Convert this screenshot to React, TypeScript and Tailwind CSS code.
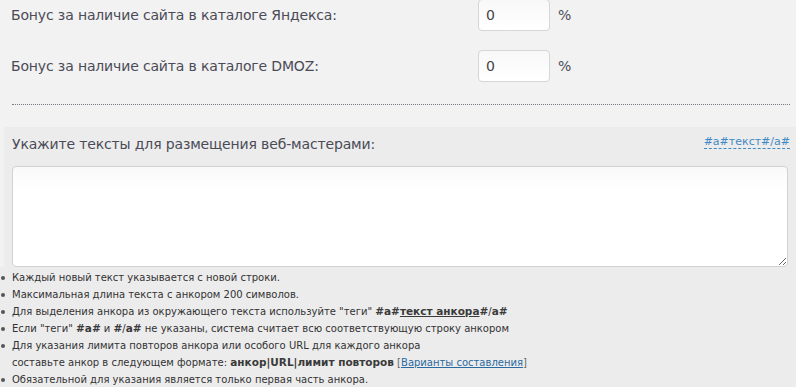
import React from "react";

const Bullet = () => (
  <span className="absolute left-[1px] top-[7px] w-[4px] h-[4px] rounded-full bg-[#555]" />
);

const B = ({ children }: { children: React.ReactNode }) => (
  <b className="text-[10.5px] text-[#3a3a3a]">{children}</b>
);

export default function App() {
  return (
    <div className="w-[796px] h-[387px] overflow-hidden bg-[#f2f2f2] text-[#4b4b57]" style={{ fontFamily: "'DejaVu Sans', Verdana, sans-serif" }}>
      <div className="flex flex-col">
        <div className="flex items-center h-[32px] mt-[-1px]">
          <div className="w-[478px] pl-[11px] text-[14px] tracking-[-0.15px]">Бонус за наличие сайта в каталоге Яндекса:</div>
          <div className="w-[72px] h-[32px] rounded-[4px] border border-[#d6d6d6] bg-gradient-to-b from-[#f8f8f8] to-white flex items-center pl-[7px] text-[14px] text-[#444]">0</div>
          <div className="ml-[8px] text-[14px]">%</div>
        </div>
        <div className="flex items-center h-[32px] mt-[19px]">
          <div className="w-[478px] pl-[11px] text-[14px] tracking-[-0.15px]">Бонус за наличие сайта в каталоге DMOZ:</div>
          <div className="w-[72px] h-[32px] rounded-[4px] border border-[#d6d6d6] bg-gradient-to-b from-[#f8f8f8] to-white flex items-center pl-[7px] text-[14px] text-[#444]">0</div>
          <div className="ml-[8px] text-[14px]">%</div>
        </div>
        <div className="mt-[22px] ml-[12px] mr-[6px] border-t border-dotted border-[#7a7a85]" />
        <div className="mt-[22px] ml-[4px] bg-[#ececec]">
          <div className="h-[39px] flex items-center justify-between pl-[8px] pr-[6px]">
            <div className="text-[14px] tracking-[-0.15px] mt-[-4px]">Укажите тексты для размещения веб-мастерами:</div>
            <span className="text-[11px] text-[#3f8ac4] border-b border-dashed border-[#3f8ac4] leading-[13px] mt-[-10px]">#a#текст#/а#</span>
          </div>
          <textarea className="block ml-[8px] w-[776px] h-[101px] rounded-[4px] border border-[#d2d2d2] bg-gradient-to-b from-[#f9f9f9] to-white to-[25%] outline-none" />
        </div>
        <ul className="pt-[2px] text-[10px] leading-[17px] text-[#333] bg-[#ececec]">
          <li className="relative pl-[12px]"><Bullet />Каждый новый текст указывается с новой строки.</li>
          <li className="relative pl-[12px]"><Bullet />Максимальная длина текста с анкором 200 символов.</li>
          <li className="relative pl-[12px]"><Bullet />Для выделения анкора из окружающего текста используйте "теги" <B>#a#<u>текст анкора</u>#</B>/<B>a#</B></li>
          <li className="relative pl-[12px]"><Bullet />Если "теги" <B>#a#</B> и <B>#</B>/<B>a#</B> не указаны, система считает всю соответствующую строку анкором</li>
          <li className="relative pl-[12px]"><Bullet />Для указания лимита повторов анкора или особого URL для каждого анкора<br />составьте анкор в следующем формате: <B>анкор|URL|лимит повторов</B> <span className="text-[#666]">[</span><span className="text-[#2a6aa0] underline">Варианты составления</span><span className="text-[#666]">]</span></li>
          <li className="relative pl-[12px]"><Bullet />Обязательной для указания является только первая часть анкора.</li>
        </ul>
      </div>
    </div>
  );
}
